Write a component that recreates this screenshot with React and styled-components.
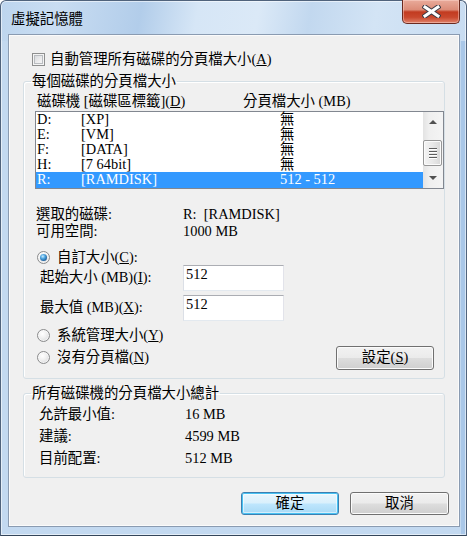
import React from 'react';
import styled, { createGlobalStyle, css } from 'styled-components';

const Global = createGlobalStyle`
  html, body { margin: 0; padding: 0; background: #ffffff; }
  body {
    width: 468px; height: 536px; overflow: hidden;
    font-family: "Liberation Serif", "Noto Sans CJK TC", serif;
    font-size: 14.4px; line-height: 15px; color: #000;
  }
  u { text-decoration-thickness: 1px; text-underline-offset: 1px; }
`;

const Window = styled.div`
  box-sizing: border-box;
  width: 467px;
  height: 536px;
  display: flex;
  flex-direction: column;
  border: 1px solid #50637c;
  border-bottom-color: #34455a;
  border-radius: 6px 6px 0 0;
  padding: 0 6px 8px 7px;
  background:
    linear-gradient(100deg, #bdd5ee 0%, #c9ddf2 12%, #b2cdea 30%, #d6e6f6 42%, #dbe9f7 55%, #c2d8ef 66%, #d3e4f5 80%, #c8dcf1 100%) top / 100% 40px no-repeat,
    linear-gradient(90deg, #c3d9f0 0, #c3d9f0 calc(100% - 5px), #a9c7e8 calc(100% - 5px)) ,
    #c3d9f0;
  box-shadow: inset 0 0 0 1px rgba(255, 255, 255, 0.55);
`;

const TitleBar = styled.div`
  height: 33px;
  display: flex;
  justify-content: space-between;
  align-items: flex-start;
`;

const TitleText = styled.div`
  padding: 11px 0 0 3px;
  color: #000;
`;

const CloseButton = styled.div`
  box-sizing: border-box;
  margin-top: -1px;
  width: 58px;
  height: 24px;
  display: flex;
  align-items: center;
  justify-content: center;
  border: 1px solid #6b2a1f;
  border-top: none;
  border-radius: 0 0 5px 5px;
  background: linear-gradient(180deg, #e9ab9b 0%, #dc8c78 42%, #c23b20 52%, #c9482d 75%, #e0826a 100%);
  box-shadow: inset 0 0 0 1px rgba(255, 220, 210, 0.45);
`;

const Client = styled.div`
  flex: 1;
  display: flex;
  flex-direction: column;
  background: #f0f0f0;
  border: 1px solid #8a9bb1;
  box-shadow: inset 0 0 0 1px #fbfbfb;
`;

const CheckRow = styled.label`
  display: flex;
  align-items: center;
  gap: 5px;
  margin: 17px 0 0 23px;
  height: 15px;
`;

const CheckBox = styled.span`
  box-sizing: border-box;
  width: 13px;
  height: 13px;
  border: 1px solid #8e8f8f;
  background: #fff;
  box-shadow: inset 0 0 0 1px #f4f4f4, inset 0 0 0 2px #b9bcc0;
  background: linear-gradient(135deg, #cfd2d6 0%, #eeeeef 60%, #f7f7f7 100%);
`;

const GroupBox = styled.fieldset`
  box-sizing: border-box;
  width: 422px;
  margin: ${p => p.$top}px 0 0 14px;
  padding: 0 ${p => p.$padRight || 0}px ${p => p.$padBottom}px 0;
  min-inline-size: 0;
  border: 1px solid #d5dfe5;
  border-radius: 3px;
  box-shadow: inset 1px 1px 0 #fff;
  display: flex;
  flex-direction: column;
`;

const Legend = styled.legend`
  padding: 0 1px;
  margin-left: 7px;
  line-height: 15px;
`;

const ListHeader = styled.div`
  display: grid;
  grid-template-columns: 206px 1fr;
  margin: 5px 0 0 13px;
  height: 15px;
`;

const ListBox = styled.div`
  box-sizing: border-box;
  width: 409px;
  height: 78px;
  margin: 2px 0 0 11px;
  border: 1px solid #828790;
  background: #fff;
  display: flex;
`;

const Rows = styled.div`
  flex: 1;
  display: flex;
  flex-direction: column;
`;

const Row = styled.div`
  display: grid;
  grid-template-columns: 44px 199px 1fr;
  padding-left: 1px;
  height: 15px;
  white-space: pre;
  ${p => p.$selected && css`
    background: #3399ff;
    color: #fff;
    height: 16px;
  `}
`;

const ScrollBar = styled.div`
  width: 20px;
  display: flex;
  flex-direction: column;
  background: linear-gradient(90deg, #e3e3e3 0%, #efefef 30%, #f4f4f4 100%);
`;

const ScrollButton = styled.div`
  height: 20px;
  display: flex;
  align-items: center;
  justify-content: center;
`;

const Arrow = styled.span`
  width: 0;
  height: 0;
  border-left: 4px solid transparent;
  border-right: 4px solid transparent;
  ${p => p.$down
    ? css`border-top: 4px solid #505050;`
    : css`border-bottom: 4px solid #505050;`}
`;

const Track = styled.div`
  flex: 1;
  display: flex;
  flex-direction: column;
`;

const Thumb = styled.div`
  box-sizing: border-box;
  margin: 8px 1px 0 0;
  height: 26px;
  border: 1px solid #979797;
  border-radius: 2px;
  background: linear-gradient(90deg, #f4f4f4 0%, #e8e8e8 50%, #d8d8d8 100%);
  box-shadow: inset 0 0 0 1px #fbfbfb;
  display: flex;
  flex-direction: column;
  align-items: center;
  justify-content: center;
  gap: 2px;
`;

const Grip = styled.span`
  width: 8px;
  height: 1px;
  background: #5e5e5e;
  box-shadow: 0 1px 0 #fff;
`;

const InfoBlock = styled.div`
  display: grid;
  grid-template-columns: ${p => p.$labelWidth}px 1fr;
  grid-auto-rows: ${p => p.$rowHeight}px;
  row-gap: ${p => p.$gap || 0}px;
  margin: ${p => p.$top}px 0 0 ${p => p.$left}px;
  white-space: pre;
`;

const RadioRow = styled.label`
  display: flex;
  align-items: center;
  gap: 7px;
  height: 15px;
  margin: ${p => p.$top}px 0 0 13px;
`;

const Radio = styled.span`
  position: relative;
  box-sizing: border-box;
  width: 13px;
  height: 13px;
  border-radius: 50%;
  border: 1px solid #8a8b8c;
  background: radial-gradient(circle at 40% 35%, #ffffff 0%, #f1f1f1 40%, #cfd1d3 100%);
  box-shadow: inset 0 0 0 1px rgba(255, 255, 255, 0.6);
  ${p => p.$checked && css`
    &::after {
      content: "";
      position: absolute;
      left: 2px; top: 2px;
      width: 7px; height: 7px;
      border-radius: 50%;
      background: radial-gradient(circle at 40% 35%, #c9ecff 0%, #4fa6e0 35%, #1c5d9a 75%, #0f3a66 100%);
    }
  `}
`;

const FieldRow = styled.div`
  display: flex;
  align-items: center;
  height: 25px;
  margin: ${p => p.$top}px 0 0 16px;
`;

const FieldLabel = styled.span`
  width: 143px;
  white-space: pre;
`;

const TextBox = styled.div`
  box-sizing: border-box;
  width: 101px;
  height: 26px;
  padding: 1px 0 0 2px;
  background: #fff;
  border: 1px solid #e2e3ea;
  border-top-color: #abadb3;
  border-bottom-color: #e3e9ef;
  border-left-color: #dbdfe6;
`;

const BottomRow = styled.div`
  display: flex;
  align-items: center;
  justify-content: space-between;
  height: 23px;
  margin-top: 3px;
`;

const Button = styled.div`
  box-sizing: border-box;
  width: ${p => p.$width || 98}px;
  height: ${p => p.$height || 23}px;
  display: flex;
  align-items: center;
  justify-content: center;
  border: 1px solid #707070;
  border-radius: 3px;
  background: linear-gradient(180deg, #f2f2f2 0%, #ebebeb 48%, #dddddd 52%, #cfcfcf 100%);
  box-shadow: inset 0 0 0 1px #fbfbfb;
  ${p => p.$primary && css`
    border-color: #3c7fb1;
    background: linear-gradient(180deg, #eaf6fd 0%, #d9f0fc 48%, #bee6fd 52%, #a7d9f5 100%);
    box-shadow: inset 0 0 0 1px #48c2f3, inset 0 0 0 2px rgba(255,255,255,0.5);
  `}
`;

const ButtonBar = styled.div`
  display: flex;
  justify-content: flex-end;
  gap: 11px;
  margin: 14px 10px 0 0;
`;

const drives = [
  ['D:', '[XP]', '無'],
  ['E:', '[VM]', '無'],
  ['F:', '[DATA]', '無'],
  ['H:', '[7 64bit]', '無'],
  ['R:', '[RAMDISK]', '512 - 512'],
];

export default function App() {
  return (
    <>
      <Global />
      <Window>
        <TitleBar>
          <TitleText>虛擬記憶體</TitleText>
          <CloseButton>
            <svg width="19" height="13" viewBox="0 0 19 13">
              <path d="M3 2 L16 11 M16 2 L3 11" stroke="#3b3b45" strokeWidth="5" strokeLinecap="square" fill="none" />
              <path d="M3 2 L16 11 M16 2 L3 11" stroke="#ffffff" strokeWidth="3" strokeLinecap="square" fill="none" />
            </svg>
          </CloseButton>
        </TitleBar>
        <Client>
          <CheckRow>
            <CheckBox />
            <span>自動管理所有磁碟的分頁檔大小(<u>A</u>)</span>
          </CheckRow>

          <GroupBox $top={7} $padBottom={9}>
            <Legend>每個磁碟的分頁檔大小</Legend>
            <ListHeader>
              <span>磁碟機 [磁碟區標籤](<u>D</u>)</span>
              <span>分頁檔大小 (MB)</span>
            </ListHeader>
            <ListBox>
              <Rows>
                {drives.map((d, i) => (
                  <Row key={d[0]} $selected={i === drives.length - 1}>
                    <span>{d[0]}</span>
                    <span>{d[1]}</span>
                    <span>{d[2]}</span>
                  </Row>
                ))}
              </Rows>
              <ScrollBar>
                <ScrollButton><Arrow /></ScrollButton>
                <Track>
                  <Thumb>
                    <Grip /><Grip /><Grip /><Grip />
                  </Thumb>
                </Track>
                <ScrollButton><Arrow $down /></ScrollButton>
              </ScrollBar>
            </ListBox>

            <InfoBlock $labelWidth={147} $rowHeight={17} $top={18} $left={12}>
              <span>選取的磁碟:</span><span>R:  [RAMDISK]</span>
              <span>可用空間:</span><span>1000 MB</span>
            </InfoBlock>

            <RadioRow $top={9}>
              <Radio $checked />
              <span>自訂大小(<u>C</u>):</span>
            </RadioRow>
            <FieldRow $top={0}>
              <FieldLabel>起始大小 (MB)(<u>I</u>):</FieldLabel>
              <TextBox>512</TextBox>
            </FieldRow>
            <FieldRow $top={5}>
              <FieldLabel>最大值 (MB)(<u>X</u>):</FieldLabel>
              <TextBox>512</TextBox>
            </FieldRow>
            <RadioRow $top={8}>
              <Radio />
              <span>系統管理大小(<u>Y</u>)</span>
            </RadioRow>
            <BottomRow>
              <RadioRow $top={0}>
                <Radio />
                <span>沒有分頁檔(<u>N</u>)</span>
              </RadioRow>
              <Button $width={98} $height={24} style={{ marginRight: 10 }}>設定(<u>S</u>)</Button>
            </BottomRow>
          </GroupBox>

          <GroupBox $top={7} $padBottom={11}>
            <Legend>所有磁碟機的分頁檔大小總計</Legend>
            <InfoBlock $labelWidth={146} $rowHeight={15} $gap={7} $top={6} $left={15}>
              <span>允許最小值:</span><span>16 MB</span>
              <span>建議:</span><span>4599 MB</span>
              <span>目前配置:</span><span>512 MB</span>
            </InfoBlock>
          </GroupBox>

          <ButtonBar>
            <Button $primary $width={98} $height={23}>確定</Button>
            <Button $width={99} $height={23}>取消</Button>
          </ButtonBar>
        </Client>
      </Window>
    </>
  );
}
